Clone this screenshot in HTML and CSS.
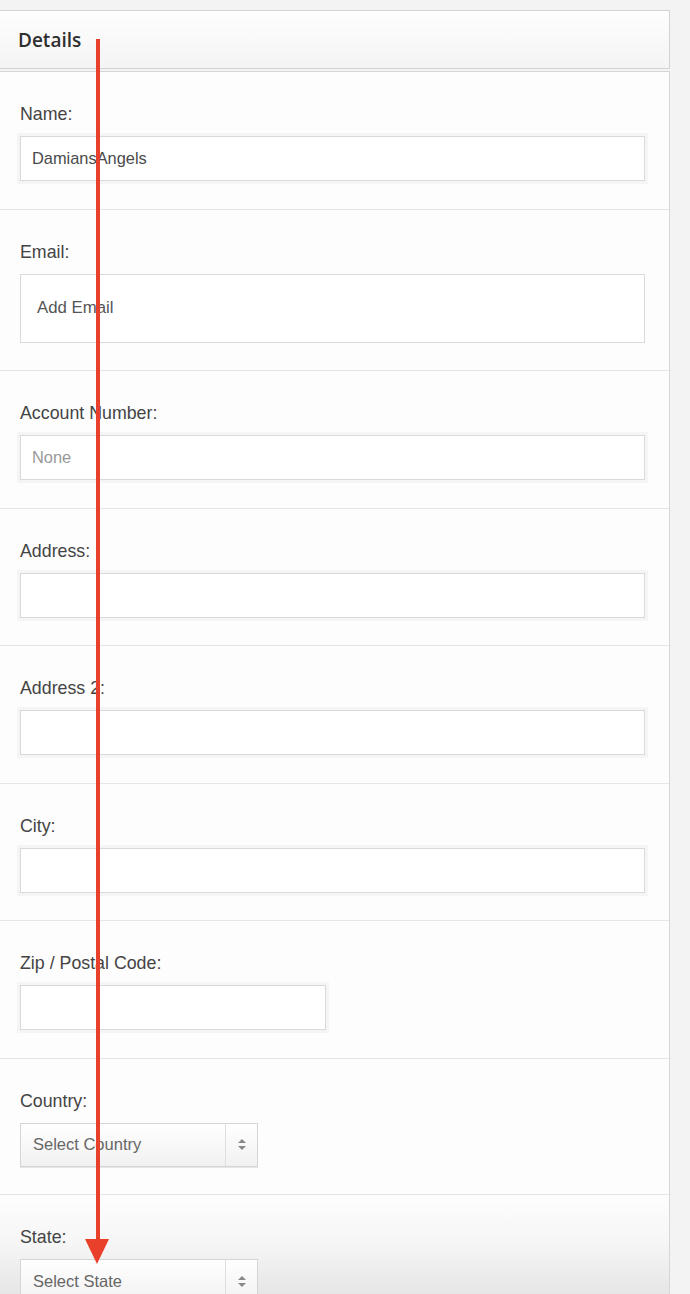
FILE: index.html
```html
<!DOCTYPE html>
<html>
<head>
<meta charset="utf-8">
<link rel="stylesheet" href="styles.css">
</head>
<body>
<div class="page">
  <div class="panel-head"><h2>Details</h2></div>
  <div class="panel-body">
    <div class="row">
      <label class="lbl">Name:</label>
      <div class="field halo"><span class="val">DamiansAngels</span></div>
    </div>
    <div class="row">
      <label class="lbl">Email:</label>
      <div class="field email"><span class="val">Add Email</span></div>
    </div>
    <div class="row">
      <label class="lbl">Account Number:</label>
      <div class="field halo"><span class="ph">None</span></div>
    </div>
    <div class="row">
      <label class="lbl">Address:</label>
      <div class="field halo"></div>
    </div>
    <div class="row">
      <label class="lbl">Address 2:</label>
      <div class="field halo"></div>
    </div>
    <div class="row">
      <label class="lbl">City:</label>
      <div class="field halo"></div>
    </div>
    <div class="row">
      <label class="lbl">Zip / Postal Code:</label>
      <div class="field halo zip"></div>
    </div>
    <div class="row">
      <label class="lbl">Country:</label>
      <div class="select"><span class="sel-text">Select Country</span><span class="sel-arrows"><i class="up"></i><i class="down"></i></span></div>
    </div>
    <div class="row">
      <label class="lbl">State:</label>
      <div class="select"><span class="sel-text">Select State</span><span class="sel-arrows"><i class="up"></i><i class="down"></i></span></div>
    </div>
  </div>
  <div class="annot-line"></div>
  <div class="annot-head"></div>
</div>
</body>
</html>
```
FILE: styles.css
```css
html, body {
  margin: 0;
  padding: 0;
  background: #f3f3f3;
}
body {
  font-family: "Liberation Sans", Arial, sans-serif;
  width: 690px;
  height: 1294px;
  overflow: hidden;
}
.page {
  position: relative;
  width: 690px;
  height: 1294px;
  padding-top: 10px;
  box-sizing: border-box;
  overflow: hidden;
}
.panel-head {
  width: 669px;
  margin-left: -1px;
  height: 57px;
  box-sizing: content-box;
  border: 1px solid #d3d3d3;
  background: linear-gradient(#fefefe, #f4f4f4);
  display: flex;
  align-items: center;
}
.panel-head h2 {
  margin: 0 0 0 18px;
  font-family: "Open Sans", sans-serif;
  font-weight: 600;
  font-size: 19px;
  color: #2f2f2f;
}
.panel-body {
  width: 669px;
  margin-left: -1px;
  margin-top: 2px;
  border: 1px solid #d6d6d6;
  border-bottom: none;
  background: linear-gradient(to bottom, #fdfdfd 0, #fdfdfd 1125px, #f6f6f6 1170px, #e6e6e6 1222px);
  height: 1222px;
}
.row {
  padding: 32px 24px 27.5px 20px;
  border-bottom: 1px solid #e6e6e6;
  display: flex;
  flex-direction: column;
  align-items: flex-start;
}
.lbl {
  font-size: 17.8px;
  line-height: 20px;
  color: #444;
  margin-bottom: 12px;
}
.field {
  width: 625px;
  height: 45px;
  box-sizing: border-box;
  border: 1px solid #d9d9d9;
  background: #fff;
  display: flex;
  align-items: center;
  font-size: 16.4px;
}
.field.halo {
  box-shadow: 0 0 0 3px #f5f5f5;
}
.field.email {
  height: 69px;
}
.field.zip {
  width: 306px;
}
.val {
  color: #4a4a4a;
  padding-left: 11px;
}
.email .val {
  padding-left: 16px;
  color: #555;
  font-size: 16.8px;
}
.ph {
  color: #999;
  padding-left: 11px;
}
.select {
  width: 238px;
  height: 44px;
  box-sizing: border-box;
  border: 1px solid #d5d5d5;
  background: linear-gradient(#ffffff, #f1f1f1);
  box-shadow: 0 1px 0 #e6e6e6;
  display: flex;
  align-items: stretch;
}
.sel-text {
  flex: 1;
  display: flex;
  align-items: center;
  padding-left: 12px;
  font-size: 16.5px;
  color: #666;
}
.sel-arrows {
  width: 31px;
  border-left: 1px solid #dedede;
  display: flex;
  flex-direction: column;
  align-items: center;
  justify-content: center;
  gap: 3px;
}
.sel-arrows i {
  display: block;
  width: 0;
  height: 0;
  border-left: 4px solid transparent;
  border-right: 4px solid transparent;
}
.sel-arrows .up {
  border-bottom: 4px solid #888;
}
.sel-arrows .down {
  border-top: 4px solid #888;
}
.annot-line {
  position: absolute;
  left: 96px;
  top: 39px;
  width: 4px;
  height: 1203px;
  background: #e8402a;
}
.annot-head {
  position: absolute;
  left: 85px;
  top: 1239px;
  width: 0;
  height: 0;
  border-left: 12.5px solid transparent;
  border-right: 12.5px solid transparent;
  border-top: 25px solid #e8402a;
}
```
